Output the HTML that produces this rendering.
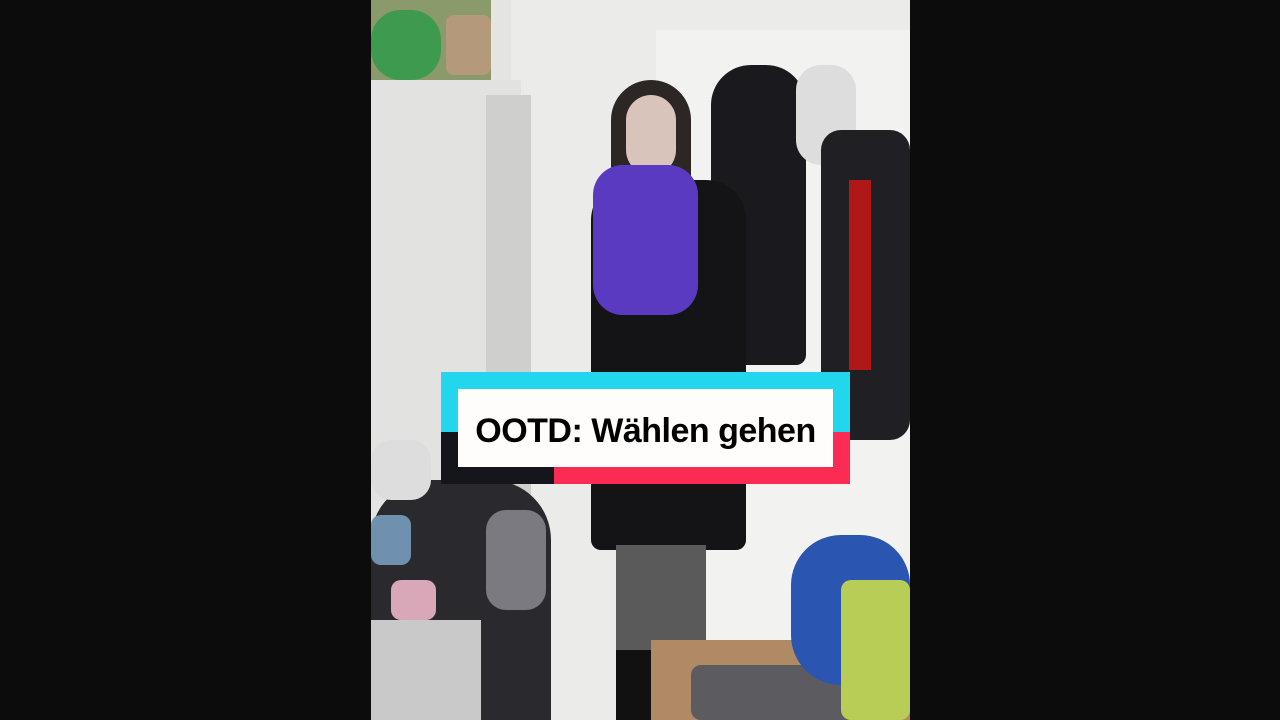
<!DOCTYPE html>
<html><head><style>
body{margin:0;width:1280px;height:720px;background:#0c0c0c;overflow:hidden;position:relative;font-family:"Liberation Sans",sans-serif}
.v{position:absolute;left:371px;top:0;width:539px;height:720px;background:#e4e4e2;overflow:hidden}
.a{position:absolute}
</style></head><body>
<div class="v">
 <div class="a" style="left:140px;top:0;width:400px;height:720px;background:#ebebea"></div>
 <div class="a" style="left:285px;top:30px;width:254px;height:610px;background:#f2f2f1"></div>
 <div class="a" style="left:0;top:80px;width:150px;height:420px;background:#e2e2e0"></div>
 <div class="a" style="left:115px;top:95px;width:45px;height:400px;background:#cfcfcd"></div>
 <div class="a" style="left:0;top:0;width:120px;height:80px;background:#8a9a6a"></div>
 <div class="a" style="left:0;top:10px;width:70px;height:70px;background:#3e9a4c;border-radius:30px"></div>
 <div class="a" style="left:75px;top:15px;width:45px;height:60px;background:#b49a7a;border-radius:8px"></div>
 <div class="a" style="left:340px;top:65px;width:95px;height:300px;background:#1a1a1e;border-radius:40px 40px 10px 10px"></div>
 <div class="a" style="left:425px;top:65px;width:60px;height:100px;background:#ddd;border-radius:25px"></div>
 <div class="a" style="left:450px;top:130px;width:89px;height:310px;background:#202024;border-radius:20px"></div>
 <div class="a" style="left:478px;top:180px;width:22px;height:190px;background:#b01818"></div>
 <div class="a" style="left:240px;top:80px;width:80px;height:150px;background:#2c2624;border-radius:40px 40px 10px 10px"></div>
 <div class="a" style="left:255px;top:95px;width:50px;height:80px;background:#d9c4bc;border-radius:25px"></div>
 <div class="a" style="left:220px;top:180px;width:155px;height:370px;background:#141416;border-radius:40px 40px 10px 10px"></div>
 <div class="a" style="left:222px;top:165px;width:105px;height:150px;background:#5a3ac0;border-radius:30px"></div>
 <div class="a" style="left:245px;top:545px;width:90px;height:110px;background:#5a5a5a"></div>
 <div class="a" style="left:245px;top:650px;width:40px;height:70px;background:#111"></div>
 <div class="a" style="left:280px;top:640px;width:259px;height:80px;background:#b08a64"></div>
 <div class="a" style="left:320px;top:665px;width:200px;height:55px;background:#5c5c60;border-radius:10px"></div>
 <div class="a" style="left:420px;top:535px;width:119px;height:150px;background:#2a55b0;border-radius:50px"></div>
 <div class="a" style="left:470px;top:580px;width:69px;height:140px;background:#b7cd56;border-radius:10px"></div>
 <div class="a" style="left:0;top:480px;width:180px;height:240px;background:#2a2a2e;border-radius:60px 60px 0 0"></div>
 <div class="a" style="left:0;top:620px;width:110px;height:100px;background:#c9c9c9"></div>
 <div class="a" style="left:0;top:440px;width:60px;height:60px;background:#ddd;border-radius:20px"></div>
 <div class="a" style="left:115px;top:510px;width:60px;height:100px;background:#7a7a80;border-radius:20px"></div>
 <div class="a" style="left:0;top:515px;width:40px;height:50px;background:#7090b0;border-radius:10px"></div>
 <div class="a" style="left:20px;top:580px;width:45px;height:40px;background:#d8a8b8;border-radius:10px"></div>
</div>
<div class="a" style="left:441px;top:372px;width:409px;height:60px;background:#22d6ee"></div>
<div class="a" style="left:441px;top:432px;width:113px;height:52px;background:#15151c"></div>
<div class="a" style="left:554px;top:432px;width:296px;height:52px;background:#fc2b53"></div>
<div class="a" style="left:458px;top:389px;width:375px;height:78px;background:#fffdfb"></div>
<div class="a" style="left:458px;top:410px;width:375px;text-align:center;font-weight:bold;font-size:34px;line-height:42px;color:#000;letter-spacing:-0.5px">OOTD: Wählen gehen</div>
</body></html>
